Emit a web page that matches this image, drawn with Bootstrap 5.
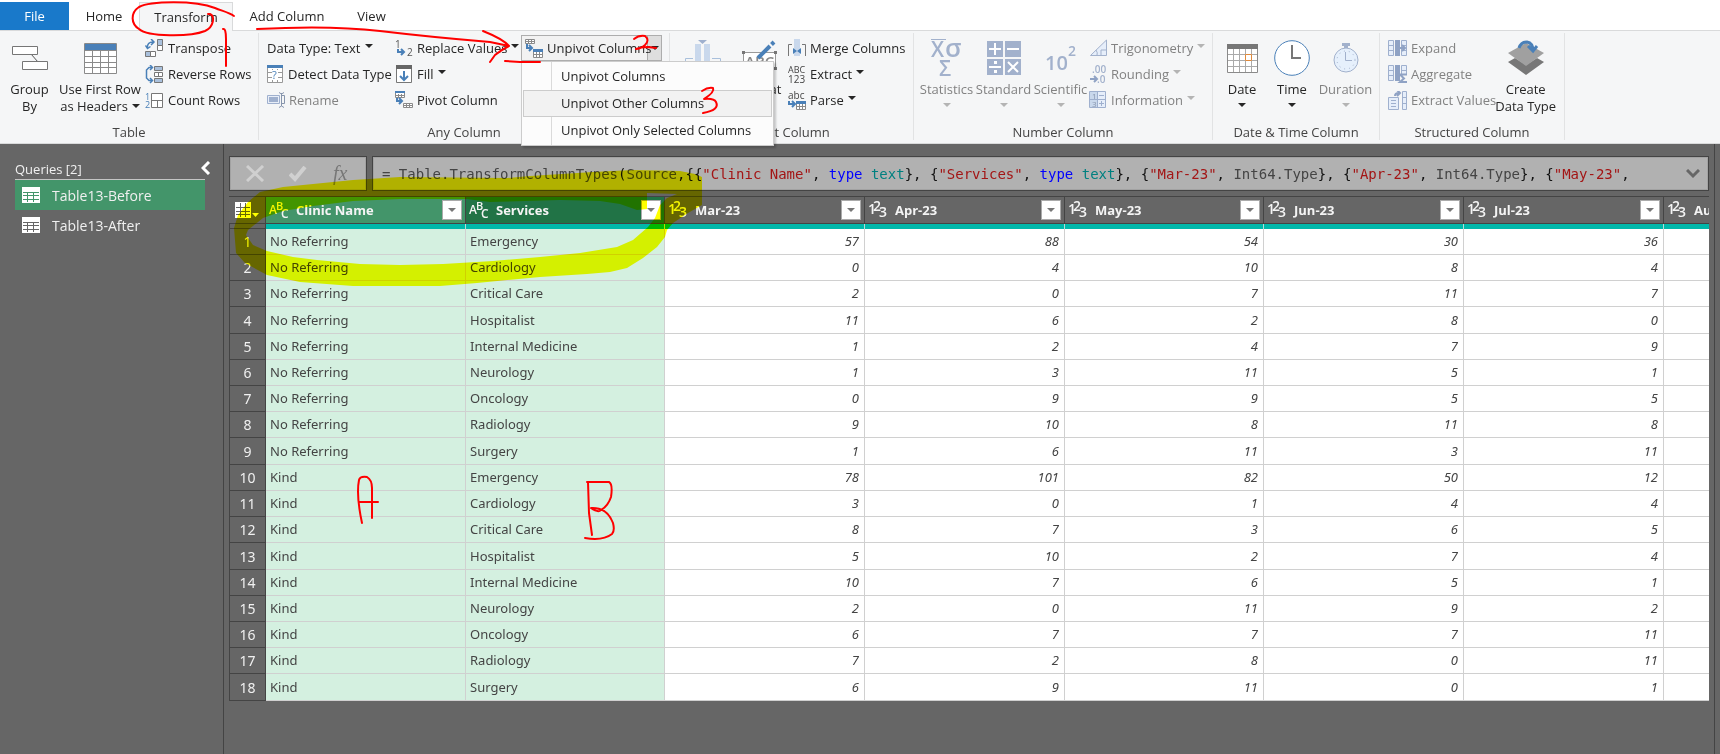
<!DOCTYPE html>
<html lang="en">
<head>
<meta charset="utf-8">
<meta name="viewport" content="width=device-width, initial-scale=1">
<title>Power Query Editor</title>
<link rel="stylesheet" href="https://cdn.jsdelivr.net/npm/bootstrap@5.3.0/dist/css/bootstrap.min.css">
<style>
:root{--pane:#666;--edge:#444;--ink:#262626;--dim:#828282}
body{font-family:"Open Sans","Noto Sans",sans-serif;font-size:13px;line-height:17px;color:var(--ink);background:#fff;overflow:hidden}
button{font:inherit;color:inherit;background:none;border:0;padding:0}
svg{display:block;flex:none}
svg text{font-family:"Open Sans","Noto Sans",sans-serif}
.tabstrip{height:31px;padding-top:2px;border-bottom:1px solid #d9dadb}
.tabstrip .nav-link{height:28px;padding:0;line-height:28px;color:var(--ink);text-align:center;border-radius:0}
.tab-file{width:69px}.tab-home{width:70px}.tab-trans{width:94px}.tab-add{width:108px}.tab-view{width:61px}
.tabstrip .tab-file{background:#1979ca;color:#fff}
.tabstrip .tab-trans{height:29px;background:#f5f6f7;border:1px solid #d9dadb;border-bottom:0}
.ribbon{height:113px;background:#f5f6f7;border-bottom:1px solid #d9dadb;padding-top:2px}
.rgroup{height:107px;border-right:1px solid #e2e3e4;padding-top:2px;flex:none}
.rbody{height:89px}
.rname{color:#444;text-align:center;height:17px}
.g-table{width:259px}.g-any{width:411px}.g-text{width:244px}.g-num{width:299px}.g-date{width:167px}.g-struct{width:185px}
.big{text-align:center;display:flex;flex-direction:column;align-items:center;flex:none;white-space:nowrap}
.big .pic{height:46px;display:flex;align-items:center;justify-content:center}
.bw-s{width:50px}.bw-m{width:57px}.bw-l{width:59px}.bw-xl{width:82px}
.smalls{flex:none}
.sm-btn{display:flex;align-items:center;height:26px;gap:4px;white-space:nowrap}
.off{color:var(--dim)}
.tri{display:inline-block;border:4px solid transparent;border-top-color:currentColor;border-bottom:0;vertical-align:middle;margin-left:4px;flex:none}
.sm-btn .tri{margin-left:0;margin-top:-4px}
.big .tri{margin-top:5px;margin-left:0}
.big .inl{margin:-3px 0 0 4px}
.off .tri{color:#b4b4b4}
.c-data{width:128px}.c-fill{width:126px}
.splitter{height:26px;width:141px;border:1px solid #adadad;background:#f2f2f2}
.splitter .face{position:relative;z-index:1;flex:1;display:flex;align-items:center;gap:4px;padding-left:3px;white-space:nowrap;min-width:0}
.splitter .drop{width:14px;background:#dedede;border-left:1px solid #adadad;display:flex;align-items:center;justify-content:center}
.splitter .drop .tri{margin:0}
.pivot-menu{--bs-dropdown-min-width:253px;top:100%;left:0;width:253px;height:85px;font-size:13px;border-radius:0;border:1px solid #ccc;padding:1px;background:linear-gradient(90deg,#fcfcfc 29px,#dadada 29px,#dadada 30px,#fcfcfc 30px);box-shadow:2px 2px 2px rgba(0,0,0,.2)}
.pivot-menu .dropdown-item{height:27px;line-height:25px;padding:0 0 0 37px;color:var(--ink);border:1px solid transparent}
.pivot-menu .dropdown-item.hot{background:#f2f2f2;border-color:#ccc}
.stage{background:var(--pane);min-height:0}
.queries{width:224px;border-right:1px solid var(--edge);padding:17px 12px 0 15px;color:#f0f0f0}
.q-head{height:18px}
.q-list{width:190px;border-top:1px solid #c4c4c4}
.q-item{width:100%;height:30px;display:flex;align-items:center;gap:12px;padding-left:7px;color:#f0f0f0;text-decoration:none;font-size:14px}
.q-item.sel{background:#43956a}
.sheet{padding:12px 5px 0;min-width:0}
.edge{width:6px;border-left:1px solid var(--edge)}
.fx{height:35px;gap:5px}
.fbox{background:#b1b1b1;border:1px solid var(--edge);box-shadow:inset 1px 1px #a2a2a2,inset -1px -1px #a2a2a2}
.fbtns{width:138px;justify-content:space-around;align-items:center;padding:0 4px}
.code{font-family:"DejaVu Sans Mono","Liberation Mono",monospace;font-size:14px;line-height:20px;white-space:pre;padding:1px 0 0 9px;color:#444;overflow:hidden}
.code b{font-weight:400;color:#a31515}.code i{font-style:normal;color:#00f}.code u{text-decoration:none;color:#008080}.code s{text-decoration:none;color:#111}
.gridwrap{margin-top:5px;overflow:hidden;border-top:1px solid var(--edge)}
.pq{table-layout:fixed;width:1635px;border-collapse:separate;border-spacing:0;color:#444;font-family:"Noto Sans","Open Sans",sans-serif}
.pq th,.pq td{padding:0;overflow:hidden;white-space:nowrap}
.pq thead th{height:27px;background:var(--pane);border-right:1px solid var(--edge);border-bottom:1px solid var(--edge);color:#f4f4f4}
.pq thead th.on{background:#43956a}.pq thead th.cur{background:#217346}
.pq .h{display:flex;align-items:center;padding:0 3px;gap:7px;font-family:"Open Sans",sans-serif}
.pq .h span{flex:1;font-weight:700;text-align:left}
.pq .filt{width:20px;height:20px;background:#fff;border:1px solid #aaa;color:#777;display:flex;align-items:center;justify-content:center}
.pq .filt .tri{margin:0}
.pq tr.bar{font-size:0;line-height:0}
.pq tr.bar td{height:5px;background:#01b8aa;border-right:1px solid #b8dcd8}
.pq tr.bar th,.pq tbody th{background:var(--pane);border:0 solid var(--edge);border-width:0 1px 1px 1px;color:#f0f0f0;font-weight:400;font-size:14px;text-align:center}
.pq tr.bar th{height:5px;font-size:0}
.pq tbody td{height:26px;border-right:1px solid #d0d0d0;border-bottom:1px solid #d0d0d0;background:#fff;padding:0 5px;text-align:right;font-style:italic}
.pq tbody tr:nth-child(9n) td,.pq tbody tr:nth-child(9n+4) td{height:27px}
.pq tbody td.t{background:#d4f0e0;text-align:left;font-style:normal;padding-left:4px}
.ink{left:0;top:0;pointer-events:none;z-index:1100}
.marker{mix-blend-mode:multiply}
</style>
</head>
<body class="vh-100 d-flex flex-column position-relative">

<ul class="nav tabstrip flex-nowrap flex-shrink-0">
  <li><a href="#" class="nav-link tab-file">File</a></li>
  <li><a href="#" class="nav-link tab-home">Home</a></li>
  <li><a href="#" class="nav-link tab-trans" aria-current="page">Transform</a></li>
  <li><a href="#" class="nav-link tab-add">Add Column</a></li>
  <li><a href="#" class="nav-link tab-view">View</a></li>
</ul>

<div class="ribbon d-flex flex-shrink-0">
  <section class="rgroup g-table">
    <div class="rbody d-flex">
      <button class="big bw-l"><span class="pic"><svg width="36" height="24"><g fill="#fff" stroke="#767676"><path d="M19 8l7 8" stroke="#555"/><path d="M.5.500h25v8H.5zM10.500 15.500h25v8h-25z"/></g></svg></span><span>Group<br>By</span></button>
      <button class="big bw-xl me-1"><span class="pic"><svg width="33" height="31"><path fill="#fff" stroke="#8a8a8a" d="M.5.500h32v30H.5z"/><path fill="#4a80b8" d="M1 1h31v6H1z"/><path stroke="#8a8a8a" d="M1 7.500h31M1 13.500h31M1 19.500h31M1 24.500h31M8.500 7v23M16.500 7v23M24.500 7v23"/></svg></span><span>Use First Row<br>as Headers<i class="tri inl"></i></span></button>
      <div class="smalls">
        <button class="sm-btn"><svg width="19" height="19"><g fill="none" stroke="#777"><path fill="#a9c0dc" d="M12.500.500h5v6h-5z"/><path fill="#fff" d="M12.500 6.500h5v5h-5z"/><path fill="#a9c0dc" d="M.5 12.500h5v5h-5z"/><path fill="#fff" d="M5.500 12.500h5v5h-5z"/></g><path fill="none" stroke="#4a80b8" stroke-width="1.500" d="M2.500 9Q2 3 8 3M6 0l3 3-3 3M.5 6.500l2 3 3-2"/></svg>Transpose</button>
        <button class="sm-btn"><svg width="19" height="19"><g stroke="#777"><path fill="#a9c0dc" d="M9.500 1.500h8v4h-8z"/><path fill="#fff" d="M9.500 7.500h8v4h-8zM13.500 7v5"/><path fill="#a9c0dc" d="M9.500 13.500h8v4h-8z"/></g><path fill="none" stroke="#4a80b8" stroke-width="1.500" d="M7 2.500H4L1.500 5v8L4 15.500h3M5 0l2.500 2.500L5 5M5 13l2.500 2.500L5 18"/></svg>Reverse Rows</button>
        <button class="sm-btn"><svg width="19" height="17"><text x="0" y="8" font-size="9" fill="#4a80b8">1</text><text x="0" y="16" font-size="9" fill="#4a80b8">2</text><path fill="#fff" stroke="#777" d="M6.500 1.500h11v14h-11zM6 8.500h12M12.500 8v7"/></svg>Count Rows</button>
      </div>
    </div>
    <div class="rname">Table</div>
  </section>

  <section class="rgroup g-any">
    <div class="rbody d-flex align-items-start ps-2">
      <div class="smalls c-data">
        <button class="sm-btn">Data Type: Text <i class="tri"></i></button>
        <button class="sm-btn"><svg width="17" height="18"><path fill="#fff" stroke="#999" d="M.5.500h15v17H.5zM1 7.500h15M1 12.500h15M5.500 4v13M10.500 4v13"/><path fill="#4a80b8" d="M0 0h16v3H0z"/><path fill="#fff" d="M5 5h6v10H5z"/><text x="5" y="14" font-size="11" fill="#4a80b8">?</text></svg>Detect Data Type</button>
        <button class="sm-btn off" disabled><svg width="18" height="16"><path fill="#e8eef8" stroke="#9fb0ce" d="M.5 3.500h12v8H.5z"/><path fill="#9fb0ce" d="M2 5h9v5H2z"/><path fill="none" stroke="#8795ad" d="M12 .5l2.500 1.500L17 .5M14.500 1v13M12 15.500l2.500-1.500 2.500 1.500M15 3.500h2.500v8H15"/></svg>Rename</button>
      </div>
      <div class="smalls c-fill">
        <button class="sm-btn"><svg width="18" height="18"><text x="0" y="9" font-size="10" fill="#555">1</text><text x="12" y="17" font-size="10" fill="#555">2</text><path fill="none" stroke="#4a80b8" stroke-width="2" d="M3 10v3h6M6 10l3 3-3 3"/></svg>Replace Values <i class="tri"></i></button>
        <button class="sm-btn"><svg width="18" height="19"><path fill="#fff" stroke="#777" d="M1.500.500h15v17h-15z"/><path fill="#666" d="M1 0h16v4H1z"/><path fill="none" stroke="#4a80b8" stroke-width="2" d="M9 6v9M5 11l4 4 4-4"/></svg>Fill <i class="tri"></i></button>
        <button class="sm-btn"><svg width="18" height="18"><path fill="#fff" stroke="#8a8a8a" d="M.5.500h9v6h-9zM3.500 3v4M6.500 3v4M1 4.500h8M8.500 12.500h9v4h-9zM9 14.500h8M11.500 13v4M14.500 13v4"/><path fill="#4a80b8" d="M0 0h10v2H0z"/><path fill="none" stroke="#4a80b8" stroke-width="2" d="M2 7v3h5M4 7l3 3-3 3"/></svg>Pivot Column</button>
      </div>
      <div class="dropdown">
        <div class="splitter d-flex">
          <button class="face"><svg width="18" height="19"><path fill="#fff" stroke="#8a8a8a" d="M.5.500h9v4h-9zM1 2.500h8M3.500 1v4M6.500 1v4M8.500 10.500h9v8h-9zM9 15.500h8M11.500 13v5M14.500 13v5"/><path fill="#4a80b8" d="M8 10h10v3H8z"/><path fill="none" stroke="#4a80b8" stroke-width="2" d="M2 5v4h5M4 6l3 3-3 3"/></svg>Unpivot Columns</button>
          <button class="drop" aria-label="Unpivot options" aria-expanded="true"><i class="tri"></i></button>
        </div>
        <ul class="dropdown-menu show pivot-menu">
          <li><a class="dropdown-item" href="#">Unpivot Columns</a></li>
          <li><a class="dropdown-item hot" href="#">Unpivot Other Columns</a></li>
          <li><a class="dropdown-item" href="#">Unpivot Only Selected Columns</a></li>
        </ul>
      </div>
    </div>
    <div class="rname">Any Column</div>
  </section>

  <section class="rgroup g-text">
    <div class="rbody d-flex ps-1">
      <button class="big bw-m"><span class="pic"><svg width="36" height="36"><path fill="#c9d8ec" d="M10 4h6v32h-6zM19 4h6v32h-6z"/><path fill="#9fb0ce" d="M13 0h9l-4.500 4z"/><path fill="none" stroke="#a9c0dc" d="M8 18.500H.5V36M27 18.500h8.500V36"/></svg></span><span>Split<br>Column</span></button>
      <button class="big bw-m"><span class="pic"><svg width="36" height="36"><path fill="#fff" stroke="#999" d="M1.500 12.500h32v16h-32z"/><text x="3" y="27" font-size="15" font-weight="600" fill="#888">ABC</text><path fill="#777" d="M0 11h3v3H0zM32 11h3v3h-3zM32 27h3v3h-3zM0 27h3v3H0z"/><path stroke="#4a80b8" stroke-width="4" d="M16 18L28 6M29.500 4.500L32 2"/></svg></span><span>Format</span><i class="tri"></i></button>
      <div class="smalls">
        <button class="sm-btn"><svg width="18" height="18"><path fill="none" stroke="#777" d="M4 5.500H.5V17M14 5.500h3.500V17"/><path fill="#c9d8ec" d="M6 0h6v17H6z"/><path fill="#4a80b8" d="M5 9l4 3-4 3zM13 9l-4 3 4 3z"/></svg>Merge Columns</button>
        <button class="sm-btn"><svg width="18" height="20"><text x="0" y="9" font-size="9" fill="#444">ABC</text><text x="0" y="19" font-size="10" fill="#444">123</text></svg>Extract <i class="tri"></i></button>
        <button class="sm-btn"><svg width="18" height="19"><text x="0" y="8" font-size="10" fill="#444">abc</text><path fill="#fff" stroke="#8a8a8a" d="M8.500 10.500h9v8h-9zM9 15.500h8M11.500 13v5M14.500 13v5"/><path fill="#4a80b8" d="M8 10h10v3H8z"/><path fill="none" stroke="#4a80b8" stroke-width="2" d="M1 10v3h5M4 10l3 3-3 3"/></svg>Parse <i class="tri"></i></button>
      </div>
    </div>
    <div class="rname">Text Column</div>
  </section>

  <section class="rgroup g-num">
    <div class="rbody d-flex ps-1">
      <button class="big bw-m off" disabled><span class="pic"><svg width="32" height="38"><g fill="#a2b1cc" font-weight="600"><text x="0" y="18" font-size="21">X</text><text x="14" y="18" font-size="26">σ</text><text x="8" y="37" font-size="21">Σ</text></g><path stroke="#a2b1cc" d="M0 .5h15"/></svg></span><span>Statistics</span><i class="tri"></i></button>
      <button class="big bw-m off" disabled><span class="pic"><svg width="34" height="34"><path fill="#a2b1cc" d="M0 0h16v16H0zM18 0h16v16H18zM0 18h16v16H0zM18 18h16v16H18z"/><path stroke="#fff" stroke-width="2" d="M2 8h12M8 2v12M20 8h12M2 26h12M21 21l10 10M31 21L21 31"/><path fill="#fff" d="M7 20h3v3H7zM7 29h3v3H7z"/></svg></span><span>Standard</span><i class="tri"></i></button>
      <button class="big bw-m off" disabled><span class="pic"><svg width="32" height="30"><g fill="#a2b1cc" font-weight="600"><text x="0" y="27" font-size="20">10</text><text x="23" y="13" font-size="14">2</text></g></svg></span><span>Scientific</span><i class="tri"></i></button>
      <div class="smalls">
        <button class="sm-btn off" disabled><svg width="18" height="18"><path fill="#e6eefa" stroke="#a2b1cc" d="M1.500 16.500L17.500 1v15.500zM12 16v-5h5M7 11q2 3 1 5"/></svg>Trigonometry <i class="tri"></i></button>
        <button class="sm-btn off" disabled><svg width="18" height="19"><g fill="#a2b1cc" font-size="10" font-weight="600"><text x="3" y="8">.00</text><text x="8" y="18">.0</text></g><path fill="none" stroke="#8fa2c4" stroke-width="2" d="M1 14h6M5 11l3 3-3 3"/></svg>Rounding <i class="tri"></i></button>
        <button class="sm-btn off" disabled><svg width="18" height="18"><path fill="#e6eefa" stroke="#9fb0ce" d="M.5.500h16v16H.5z"/><path fill="#c9d8ec" d="M1 1h8v15H1z"/><path stroke="#9fb0ce" d="M1 8.500h16M8.500 1v16M10 4.500h5M10 12.500h5M12.500 10v5"/><g fill="#8795ad" font-size="8"><text x="3" y="8">1</text><text x="3" y="16">3</text></g></svg>Information <i class="tri"></i></button>
      </div>
    </div>
    <div class="rname">Number Column</div>
  </section>

  <section class="rgroup g-date">
    <div class="rbody d-flex ps-1">
      <button class="big bw-s"><span class="pic"><svg width="31" height="29"><path fill="#fff" stroke="#8a8a8a" d="M.5.500h30v28H.5z"/><path fill="#777" d="M0 0h31v5H0z"/><path stroke="#aaa" d="M1 10.500h29M1 16.500h29M1 22.500h29M6.500 5v23M12.500 5v23M18.500 5v23M24.500 5v23"/><path fill="#fff" stroke="#e08a3c" d="M18.500 10.500h6v6h-6z"/></svg></span><span>Date</span><i class="tri"></i></button>
      <button class="big bw-s"><span class="pic"><svg width="36" height="36"><circle cx="18" cy="18" r="17.300" fill="#fff" stroke="#4a80b8"/><path fill="none" stroke="#777" stroke-width="2" d="M18 5v13h9"/></svg></span><span>Time</span><i class="tri"></i></button>
      <button class="big bw-m off" disabled><span class="pic"><svg width="26" height="30"><circle cx="13" cy="17" r="12" fill="#e6f0fc" stroke="#a2b1cc"/><path fill="#a2b1cc" d="M9 0h8v3H9zM11 3h4v2h-4z"/><path fill="none" stroke="#a2b1cc" d="M12.500 9v8.500H19"/><circle cx="13" cy="17" r="9" fill="none" stroke="#a2b1cc" stroke-dasharray="1 4"/></svg></span><span>Duration</span><i class="tri"></i></button>
    </div>
    <div class="rname">Date &amp; Time Column</div>
  </section>

  <section class="rgroup g-struct">
    <div class="rbody d-flex ps-2">
      <div class="smalls">
        <button class="sm-btn off" disabled><svg width="19" height="16"><path fill="#e6eefa" stroke="#9fb0ce" d="M.5.500h5v15h-5zM1 5.500h5M1 10.500h5M13.500.500h5v15h-5zM13 5.500h6M13 10.500h6"/><path fill="#8fa2c4" d="M7 0h5v16H7z"/><path fill="none" stroke="#8fa2c4" stroke-width="2" d="M10 8h6M14 5l3 3-3 3"/></svg>Expand</button>
        <button class="sm-btn off" disabled><svg width="19" height="18"><path fill="#e6eefa" stroke="#9fb0ce" d="M.5.500h5v15h-5zM1 5.500h5M1 10.500h5M13.500.500h5v9h-5zM13 5.500h6"/><path fill="#8fa2c4" d="M7 0h5v16H7z"/><path fill="#f5f6f7" stroke="#8fa2c4" stroke-width="2" d="M19 9.500h-7l4 4-4 3.500h7"/></svg>Aggregate</button>
        <button class="sm-btn off" disabled><svg width="19" height="19"><path fill="#e6eefa" stroke="#9fb0ce" d="M.5 6.500h10v12H.5zM3 9.500h5M3 12.500h5M3 15.500h5M14.500.500h4v18h-4zM14 6.500h5M14 12.500h5"/><path fill="none" stroke="#8fa2c4" stroke-width="2" d="M7 5q0-3 4-3M9-1l3 3-3 3"/></svg>Extract Values</button>
      </div>
      <button class="big bw-l"><span class="pic"><svg width="36" height="36"><path fill="#777" d="M0 22l7-4 11 7 11-7 7 4-18 13z"/><path fill="#a0a0a0" d="M0 13l18-10 18 10-18 13z"/><path fill="none" stroke="#4a80b8" stroke-width="3" d="M11 8q2-6 8-6 6 1 6 9M20 6l5 5 4-5"/></svg></span><span>Create<br>Data Type</span></button>
    </div>
    <div class="rname">Structured Column</div>
  </section>
</div>

<div class="stage d-flex flex-fill">
  <aside class="queries flex-shrink-0">
    <div class="q-head d-flex justify-content-between">
      <span>Queries [2]</span>
      <button aria-label="Collapse queries pane" class="align-self-start"><svg width="10" height="14"><path fill="none" stroke="#fff" stroke-width="3" d="M8 1L2 7l6 6"/></svg></button>
    </div>
    <div class="q-list">
      <a href="#" class="q-item sel"><svg width="18" height="16"><path fill="#fff" d="M0 0h18v16H0z"/><path stroke="#43956a" d="M1 5.500h16M1 8.500h16M1 12.500h16M5.500 5v10M11.500 5v10"/></svg>Table13-Before</a>
      <a href="#" class="q-item"><svg width="18" height="16"><path fill="#fff" d="M0 0h18v16H0z"/><path stroke="#666" d="M1 5.500h16M1 8.500h16M1 12.500h16M5.500 5v10M11.500 5v10"/></svg>Table13-After</a>
    </div>
  </aside>

  <main class="sheet flex-fill">
    <div class="fx d-flex">
      <div class="fbox fbtns d-flex flex-shrink-0">
        <button aria-label="Cancel"><svg width="19" height="17"><path stroke="#d0d0d0" stroke-width="3" d="M1 1l16 15M17 1L1 16"/></svg></button>
        <button aria-label="Apply"><svg width="18" height="16"><path fill="none" stroke="#d0d0d0" stroke-width="4" d="M1 8l5 5L16 1"/></svg></button>
        <button aria-label="Insert step"><svg width="18" height="22"><text x="1" y="17" font-size="20" font-style="italic" fill="#777" style="font-family:'Liberation Serif',serif">fx</text></svg></button>
      </div>
      <div class="fbox d-flex flex-fill align-items-center overflow-hidden">
        <div class="code flex-fill">= Table.TransformColumnTypes<s>(</s>Source<s>,{{</s><b>"Clinic Name"</b><s>,</s> <i>type</i> <u>text</u><s>}, {</s><b>"Services"</b><s>,</s> <i>type</i> <u>text</u><s>}, {</s><b>"Mar-23"</b><s>,</s> Int64.Type<s>}, {</s><b>"Apr-23"</b><s>,</s> Int64.Type<s>}, {</s><b>"May-23"</b><s>,</s></div>
        <button aria-label="Expand formula bar" class="flex-shrink-0 me-2"><svg width="14" height="10"><path fill="none" stroke="#666" stroke-width="3" d="M1 1l6 6 6-6"/></svg></button>
      </div>
    </div>

    <div class="gridwrap">
      <table class="pq">
        <colgroup><col style="width:37px"><col style="width:200px"><col style="width:199px"><col style="width:200px"><col style="width:200px"><col style="width:199px"><col style="width:200px"><col style="width:200px"><col style="width:200px"></colgroup>
        <thead id="head"></thead>
        <tbody id="rows"></tbody>
      </table>
    </div>
  </main>
  <div class="edge flex-shrink-0"></div>
</div>

<svg class="ink marker position-absolute" width="1720" height="754" aria-hidden="true">
  <path fill="#ff0" fill-rule="evenodd" d="M400 177L353 180 313 184 283 187 260 192 248 202 238 215 234 228 236 253 245 263 267 275 300 282 353 286 440 286 477 283 540 277 587 274 610 272 627 268 643 258 657 247 665 237 667 230 673 223 688 213 702 205V177L695 174 680 171 633 170 593 172 530 176 507 178zM400 265L360 264 317 260 293 257 267 251 253 245 246 235 248 230 263 218 283 211 313 206 353 201 400 199 467 199 490 202 560 200 600 201 620 204 637 210 647 209V193L677 194 667 198 660 205 655 218 648 227 633 240 617 247 580 253 540 257 493 261 443 264z"/>
</svg>
<svg class="ink position-absolute" width="1720" height="754" aria-hidden="true">
  <g fill="none" stroke="#f00" stroke-width="2" stroke-linecap="round" stroke-linejoin="round">
    <path d="M234 16C228 12 222 11 215 8 195 0 150 1 139 7 130 13 131 24 139 29 148 37 190 37 205 31 214 27 215 16 210 14h-2"/>
    <path d="M223 29q3-1 3 10v27"/>
    <path d="M257 29Q330 25 380 31T490 42L509 46M483 31q20 8 26 15-8 4-14 9l-5 7M505 61l15 1h20"/>
    <path d="M634 39q5-4 11-3 5 4 0 9-5 4-9 4 5-2 12-2l8 1"/>
    <path d="M702 91q6-4 11-3 2 4-9 11 10-1 12 3 4 8-13 11"/>
    <path d="M362 523Q356 495 359 480 360 476 367 477 372 480 372 488v30M360 502h18"/>
    <path d="M587 482h22q4 2 2 15-3 9-10 13-3 3-10-2 16-1 22 15 2 8-1 11-9 7-27 4M588 482l1 31 3 22"/>
  </g>
</svg>

<script>
const cols = ["Clinic Name","Services","Mar-23","Apr-23","May-23","Jun-23","Jul-23","Aug-23"];
const services = ["Emergency","Cardiology","Critical Care","Hospitalist","Internal Medicine","Neurology","Oncology","Radiology","Surgery"];
const values = [
  [57,88,54,30,36],[0,4,10,8,4],[2,0,7,11,7],[11,6,2,8,0],[1,2,4,7,9],[1,3,11,5,1],[0,9,9,5,5],[9,10,8,11,8],[1,6,11,3,11],
  [78,101,82,50,12],[3,0,1,4,4],[8,7,3,6,5],[5,10,2,7,4],[10,7,6,5,1],[2,0,11,9,2],[6,7,7,7,11],[7,2,8,0,11],[6,9,11,0,1]];
const corner = '<svg class="ms-1" width="28" height="16"><path fill="#fff" d="M2 0h16v16H2z"/><path stroke="#666" d="M3 5.500h14M3 9.500h14M3 12.500h14M7.500 1v14M12.500 1v14"/><path fill="#fff" d="M19 11h7l-3.500 4z"/></svg>';
const textIcon = '<svg width="20" height="22"><g fill="#f4f4f4" font-size="12" font-weight="600"><text x="0" y="15">A</text><text x="7" y="11" font-size="11">B</text><text x="12" y="19">C</text></g></svg>';
const numIcon = '<svg width="20" height="22"><g fill="#f4f4f4" font-size="14" font-weight="600"><text x="0" y="15">1</text><text x="5" y="12">2</text><text x="11" y="18">3</text></g></svg>';
document.getElementById("head").innerHTML =
  '<tr><th class="border-start-0">' + corner + '</th>' +
  cols.map((c, i) => '<th class="' + (i == 0 ? 'on' : i == 1 ? 'cur' : '') + '"><div class="h">' + (i < 2 ? textIcon : numIcon) + '<span>' + c + '</span><button class="filt" aria-label="Filter ' + c + '"><i class="tri"></i></button></div></th>').join("") +
  '</tr><tr class="bar"><th></th>' + cols.map(() => '<td></td>').join("") + '</tr>';
document.getElementById("rows").innerHTML = values.map((r, i) =>
  '<tr><th scope="row">' + (i + 1) + '</th><td class="t">' + (i < 9 ? "No Referring" : "Kind") + '</td><td class="t">' + services[i % 9] + '</td>' +
  r.map(v => '<td>' + v + '</td>').join("") + '<td></td></tr>').join("");
</script>
<script src="https://cdn.jsdelivr.net/npm/bootstrap@5.3.0/dist/js/bootstrap.bundle.min.js"></script>
</body>
</html>
